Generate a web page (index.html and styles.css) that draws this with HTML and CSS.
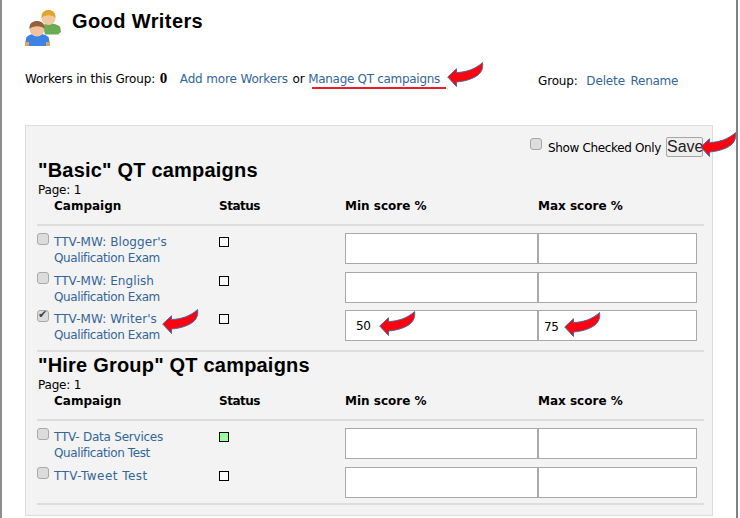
FILE: index.html
```html
<!DOCTYPE html>
<html lang="en">
<head>
<meta charset="utf-8">
<title>Good Writers</title>
<link rel="stylesheet" href="styles.css">
</head>
<body>
<svg width="0" height="0" class="defs" aria-hidden="true">
  <symbol id="arrow" viewBox="0 0 37 26">
    <path d="M0.7 15 L9.5 6.8 L9.5 10.5 C18 10.5 29 7 35.6 0.5 C36.6 8 33 12.5 27 15.5 C21 18.5 15 19.5 9.5 20 L9.5 24.5 Z" fill="#fb0311" stroke="#4d6a9e" stroke-width="1"/>
  </symbol>
</svg>
<main class="page">
  <header class="title">
    <svg class="group-icon" viewBox="0 0 36 36" aria-hidden="true">
      <path d="M18 16 C20 13 22 13 24 13.5 C27 13 32 14 35 16.5 L36 22 L33 24.5 L20 24.5 Z" fill="#6cab55"/>
      <circle cx="23.5" cy="8" r="7" fill="#f1c9a0"/>
      <path d="M16.5 8 C16 1 21 0 23.5 0 C26 0 31 1 30.5 8 C28 4.5 20 4 16.5 8 Z" fill="#e2a32f"/>
      <path d="M0 34 L1.5 27 C5 24 9 23.5 12 24 C15 23.5 20 24 23.5 27 L25 34 L23 36 L2 36 Z" fill="#3c83e3"/>
      <path d="M0 32 L4 32 L4 36 L0 36 Z M21 32 L25 32 L25 36 L21 36 Z" fill="#e0a060"/>
      <circle cx="12" cy="19" r="7.4" fill="#efc2a0"/>
      <path d="M4.5 19 C4 13 8 11 12 11 C16 11 20 13 19.5 19 C17 15.5 8 15 4.5 19 Z" fill="#96603a"/>
    </svg>
    <h1>Good Writers</h1>
  </header>

  <div class="summary">
    <p class="workers">Workers in this Group: <b class="count">0</b> <a class="add" href="#">Add more Workers</a> or <a class="manage" href="#">Manage QT campaigns</a></p>
    <p class="group-actions">Group: <a class="delete" href="#">Delete</a> <a class="rename" href="#">Rename</a></p>
  </div>

  <form class="panel">
    <div class="toolbar">
      <label class="only"><input type="checkbox" class="check"><span>Show Checked Only</span></label>
      <button type="button" class="save">Save</button>
    </div>

    <section>
      <h2>"Basic" QT campaigns</h2>
      <div class="pager">Page: 1</div>
      <div class="grid head"><span></span><span>Campaign</span><span class="head-status">Status</span><span>Min score %</span><span>Max score %</span></div>
      <hr class="rule">
      <div class="grid rows">
        <input type="checkbox" class="check"><a href="#"><span class="mw">TTV-MW: Blogger's</span><br>Qualification Exam</a><i class="status"></i><input class="field" type="text"><input class="field" type="text">
        <input type="checkbox" class="check"><a href="#"><span class="mw">TTV-MW: English</span><br>Qualification Exam</a><i class="status"></i><input class="field" type="text"><input class="field" type="text">
        <input type="checkbox" class="check" checked><a href="#"><span class="mw">TTV-MW: Writer's</span><br>Qualification Exam</a><i class="status"></i><input class="field wide-pad" type="text" value="50"><input class="field low" type="text" value="75">
      </div>
      <hr class="rule end-a">
    </section>

    <section>
      <h2 class="second">"Hire Group" QT campaigns</h2>
      <div class="pager">Page: 1</div>
      <div class="grid head"><span></span><span>Campaign</span><span class="head-status">Status</span><span>Min score %</span><span>Max score %</span></div>
      <hr class="rule">
      <div class="grid rows">
        <input type="checkbox" class="check"><a href="#"><span class="data">TTV- Data Services</span><br>Qualification Test</a><i class="status on"></i><input class="field" type="text"><input class="field" type="text">
        <input type="checkbox" class="check"><a href="#"><span class="tweet">TTV-Tweet Test</span></a><i class="status"></i><input class="field" type="text"><input class="field" type="text">
      </div>
      <hr class="rule end-b">
    </section>
  </form>

  <div class="underline"></div>
  <svg class="arrow a-manage"><use href="#arrow"/></svg>
  <svg class="arrow a-save"><use href="#arrow"/></svg>
  <svg class="arrow a-writer"><use href="#arrow"/></svg>
  <svg class="arrow a-min"><use href="#arrow"/></svg>
  <svg class="arrow a-max"><use href="#arrow"/></svg>
</main>
</body>
</html>
```
FILE: styles.css
```css
* { box-sizing: border-box; }
html, body { margin: 0; padding: 0; background: #fff; }
body { width: 740px; height: 518px; overflow: hidden; font: 12px/16px "DejaVu Sans", sans-serif; color: #000; }
.defs { position: absolute; }
a { color: #336699; text-decoration: none; }

.page { position: relative; width: 738px; height: 518px; border-left: 2px solid #8f8f8f; border-right: 2px solid #7d828a; padding: 0 23px; }

.title { display: flex; align-items: flex-start; height: 70px; padding-top: 10px; }
.group-icon { width: 36px; height: 36px; flex: none; filter: blur(.4px); }
h1 { margin: 0 0 0 11px; font: bold 20px/22px "Liberation Sans", sans-serif; letter-spacing: .4px; }

.summary { display: flex; height: 55px; letter-spacing: -.15px; }
.summary p { margin: 0; }
.workers { width: 513px; }
.count { font: bold 15px/16px "Liberation Serif", serif; margin: 0 9px 0 1px; }
.add { margin-right: 1px; }
.manage { letter-spacing: -.3px; }
.group-actions { margin-top: 3px !important; }
.delete { margin: 0 2px 0 5px; }
.rename { letter-spacing: -.3px; }

.panel { width: 688px; height: 391px; padding: 0 8px 0 11px; background: #f3f3f3; border: 1px solid #dcdcdc; }
.toolbar { display: flex; justify-content: flex-end; padding: 11px 1px 0 0; height: 32px; }
.only { display: flex; align-items: flex-start; margin-right: 5px; letter-spacing: -.35px; }
.only .check { margin-top: 1px; }
.only span { margin: 3px 0 0 6px; }
.save { width: 37px; height: 20px; padding: 0; font: 16px/18px "Liberation Sans", sans-serif; color: #222; background: #eee; border: 1px solid #a6a6a6; border-radius: 2px; }

h2 { margin: 0 0 1px 1px; font: bold 20px/24px "Liberation Sans", sans-serif; letter-spacing: .2px; }
h2.second { margin-top: 1px; }
.pager { margin-left: 1px; height: 14px; line-height: 14px; letter-spacing: -.2px; }

.grid { display: grid; grid-template-columns: 17px 165px 126px 193px 159px; }
.head { height: 18px; font-weight: bold; line-height: 18px; }
.head-status { letter-spacing: -.5px; }
.rule { height: 2px; margin: 9px 0 7px; border: 0; background: #dddddd; }
.end-a { margin: 9px 0 0; }
.end-b { margin: 5px 0 0; }
.rows { row-gap: 7.5px; grid-auto-rows: 31px; }
.rows a { line-height: 16px; margin-top: 1px; letter-spacing: -.4px; }
.mw { letter-spacing: .07px; }
.data { letter-spacing: -.23px; }
.tweet { letter-spacing: .46px; }

.check { appearance: none; position: relative; width: 12px; height: 12px; margin: 0; background: #dcdcdc; border: 1px solid #a8a8a8; border-radius: 3px; }
.check:checked::after { content: "\2714"; position: absolute; left: 0; top: -3px; font: 11px/14px "DejaVu Sans", sans-serif; color: #444; }
.status { display: block; width: 10px; height: 10px; margin-top: 4px; background: #fff; border: 1px solid #000; }
.status.on { background: #99ff99; }
.field { width: 100%; height: 31px; margin: 0; padding: 0 0 0 5px; font: 12px "DejaVu Sans", sans-serif; letter-spacing: -.35px; color: #000; background: #fff; border: 1px solid #a9a9a9; border-radius: 0; outline: 0; }
.wide-pad { padding-left: 10px; }
.low { padding-top: 2px; }

.underline { position: absolute; left: 310px; top: 87px; width: 134px; height: 2px; background: #e81c2c; }
.arrow { position: absolute; width: 37px; height: 26px; overflow: visible; }
.a-manage { left: 445px; top: 62px; }
.a-save { left: 698px; top: 132px; }
.a-writer { left: 160px; top: 309px; }
.a-min { left: 377px; top: 311px; }
.a-max { left: 562px; top: 312px; }
```
